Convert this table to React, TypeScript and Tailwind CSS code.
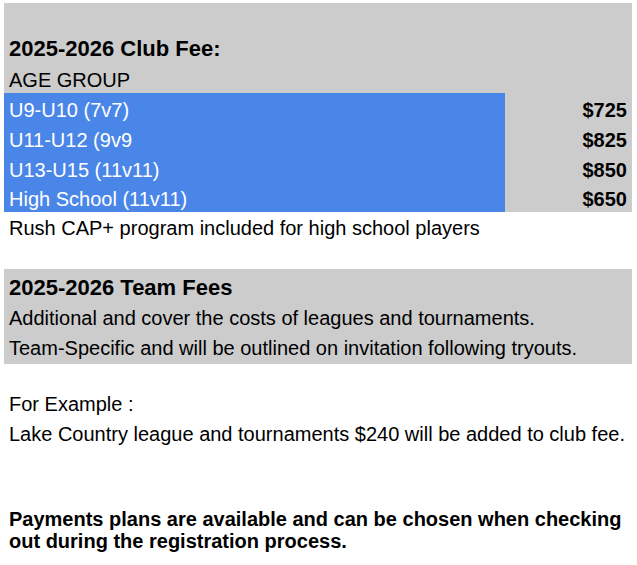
const rows = [
  { group: "U9-U10 (7v7)", price: "$725" },
  { group: "U11-U12 (9v9", price: "$825" },
  { group: "U13-U15 (11v11)", price: "$850" },
  { group: "High School (11v11)", price: "$650" },
];

const App = () => {
  return (
    <div className="min-h-screen bg-white pt-[3px] pl-[4px] pr-[5px] text-[20px] text-black [font-family:'Liberation_Sans',Arial,sans-serif]">
      <div className="bg-[#cccccc] pt-[31px]">
        <h2 className="px-[5px] text-[22px] font-bold leading-[30px]">
          2025-2026 Club Fee:
        </h2>
        <div className="px-[5px] pt-[3px] leading-[26px]">AGE GROUP</div>
        <div className="flex">
          <div className="w-[501px] bg-[#4a86e8] text-white">
            {rows.map((r) => (
              <div key={r.group} className="h-[29.75px] px-[5px] pt-[6px] leading-[23px]">
                {r.group}
              </div>
            ))}
          </div>
          <div className="flex-1 text-right font-bold">
            {rows.map((r) => (
              <div key={r.price} className="h-[29.75px] px-[5px] pt-[6px] leading-[23px]">
                {r.price}
              </div>
            ))}
          </div>
        </div>
      </div>
      <p className="mt-[2px] px-[5px] leading-[28px]">
        Rush CAP+ program included for high school players
      </p>

      <div className="mt-[27px] bg-[#cccccc] px-[5px] pt-[4px] pb-[1px] leading-[30px]">
        <h2 className="text-[22px] font-bold">2025-2026 Team Fees</h2>
        <p>Additional and cover the costs of leagues and tournaments.</p>
        <p>Team-Specific and will be outlined on invitation following tryouts.</p>
      </div>

      <div className="mt-[25px] px-[5px] leading-[30px]">
        <p>For Example :</p>
        <p>Lake Country league and tournaments $240 will be added to club fee.</p>
      </div>

      <p className="mt-[59px] px-[5px] font-bold leading-[22px]">
        Payments plans are available and can be chosen when checking out during
        the registration process.
      </p>
    </div>
  );
};

export default App;
